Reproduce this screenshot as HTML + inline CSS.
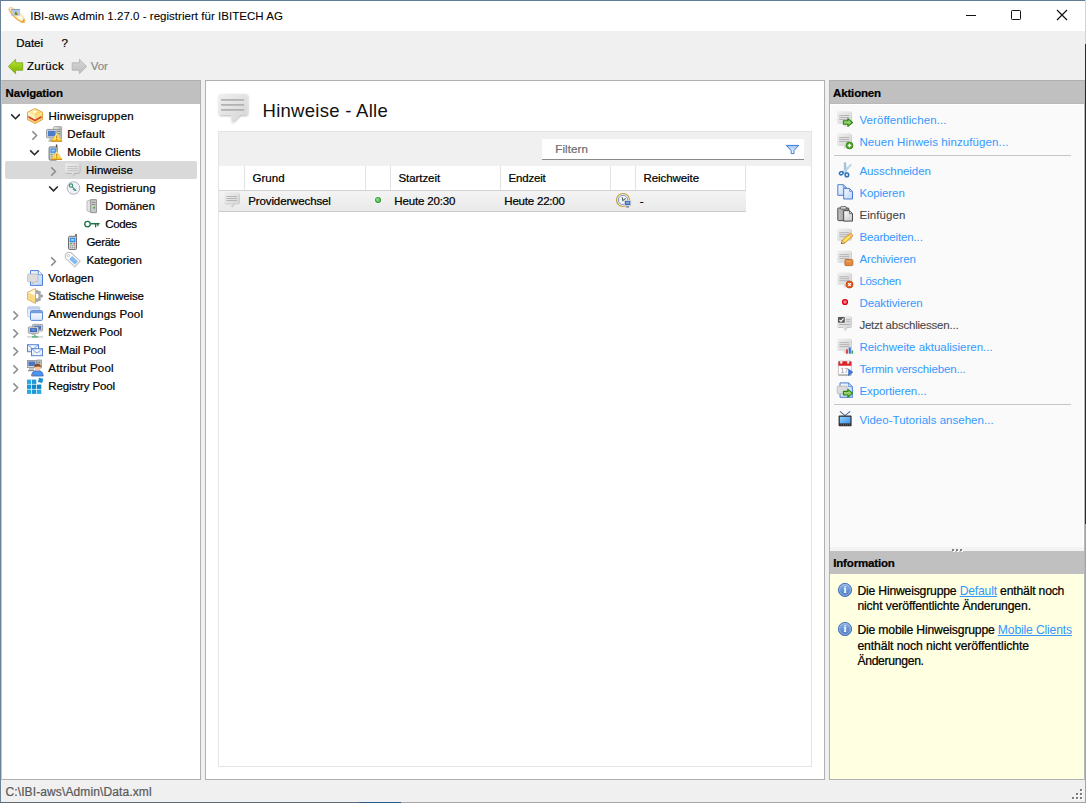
<!DOCTYPE html>
<html lang="de"><head><meta charset="utf-8"><title>IBI-aws Admin</title><style>
html,body{margin:0;padding:0;}
body{width:1086px;height:803px;overflow:hidden;background:#f0f0f0;font-family:"Liberation Sans", sans-serif;font-size:12px;color:#000;position:relative;}
.a{position:absolute;}
.t{position:absolute;white-space:pre;line-height:16px;height:16px;-webkit-text-stroke:0.22px currentColor;}
svg{position:absolute;overflow:visible;}
</style></head><body>
<!-- window frame -->
<div class="a" style="left:0;top:0;width:1086px;height:1px;background:#5f7e96"></div>
<div class="a" style="left:0;top:0;width:1px;height:803px;background:#6a8396"></div>
<div class="a" style="left:0;top:802px;width:1086px;height:1px;background:linear-gradient(90deg,#5f6b76 0,#5f6b76 359px,#2a5a8a 359px,#2a5a8a 401px,#a4a4a4 401px)"></div>
<div class="a" style="left:1085px;top:0;width:1px;height:803px;background:#a4a4a4"></div>
<div class="a" style="left:1085px;top:44px;width:1px;height:480px;background:#2b2b2b"></div>
<div class="a" style="left:1085px;top:0;width:1px;height:44px;background:#c9d6df"></div>
<!-- title bar -->
<div class="a" style="left:1px;top:1px;width:1084px;height:30px;background:#fff"></div>
<!-- navigation panel -->
<div class="a" style="left:1px;top:80px;width:200px;height:700px;background:#fff;box-sizing:border-box;border:1px solid #b0b0b0;border-left-color:#c8c8c8"></div>
<div class="a" style="left:2px;top:81px;width:198px;height:23px;background:#c0c0c0"></div>
<div class="a" style="left:5px;top:161px;width:192px;height:18px;background:#d9d9d9;border-radius:2px"></div>
<!-- centre panel -->
<div class="a" style="left:205px;top:80px;width:620px;height:700px;background:#fff;box-sizing:border-box;border:1px solid #b0b0b0"></div>
<div class="a" style="left:218px;top:131px;width:594px;height:636px;background:#fff;box-sizing:border-box;border:1px solid #e4e4e4"></div>
<div class="a" style="left:219px;top:132px;width:592px;height:34px;background:#f0f0f0"></div>
<div class="a" style="left:542px;top:139px;width:262px;height:20px;background:#fff;border-bottom:1px solid #8a8a8a"></div>
<!-- table header -->
<div class="a" style="left:219px;top:190px;width:527px;height:1px;background:#d2d2d2"></div>
<div class="a" style="left:244px;top:166px;width:1px;height:24px;background:#e2e2e2"></div>
<div class="a" style="left:365px;top:166px;width:1px;height:24px;background:#e2e2e2"></div>
<div class="a" style="left:390px;top:166px;width:1px;height:24px;background:#e2e2e2"></div>
<div class="a" style="left:500px;top:166px;width:1px;height:24px;background:#e2e2e2"></div>
<div class="a" style="left:610px;top:166px;width:1px;height:24px;background:#e2e2e2"></div>
<div class="a" style="left:635px;top:166px;width:1px;height:24px;background:#e2e2e2"></div>
<div class="a" style="left:745px;top:166px;width:1px;height:24px;background:#e2e2e2"></div>
<!-- table row -->
<div class="a" style="left:219px;top:191px;width:527px;height:20px;background:linear-gradient(#f4f4f4,#e9e9e9)"></div>
<div class="a" style="left:219px;top:211px;width:527px;height:1px;background:#cbcbcb"></div>
<!-- actions panel -->
<div class="a" style="left:829px;top:80px;width:256px;height:471px;background:#fbfbfb;box-sizing:border-box;border:1px solid #b0b0b0;border-right:0;border-bottom:0"></div>
<div class="a" style="left:830px;top:81px;width:255px;height:23px;background:#c0c0c0"></div>
<div class="a" style="left:830px;top:103px;width:254px;height:1px;background:#b9b9b9"></div>
<div class="a" style="left:830px;top:104px;width:254px;height:443px;background:#fff"></div>
<div class="a" style="left:831px;top:105px;width:252px;height:442px;background:#fafafa"></div>
<div class="a" style="left:830px;top:547px;width:254px;height:4px;background:#f3f3f3"></div>
<div class="a" style="left:834px;top:155px;width:237px;height:1px;background:#c6c6c6"></div>
<div class="a" style="left:834px;top:404px;width:237px;height:1px;background:#c6c6c6"></div>
<!-- information panel -->
<div class="a" style="left:829px;top:551px;width:256px;height:229px;background:#ffffe1;box-sizing:border-box;border:1px solid #b0b0b0;border-right:0;border-top:0"></div>
<div class="a" style="left:830px;top:551px;width:255px;height:23px;background:#c0c0c0"></div>
<div class="a" style="left:1084px;top:80px;width:1px;height:700px;background:#b4b8bc"></div>

<svg class="a" style="left:0;top:0" width="1086" height="803" viewBox="0 0 1086 803">
<defs>
<linearGradient id="gB" x1="0" y1="0" x2="1" y2="1"><stop offset="0" stop-color="#f0f0f0"/><stop offset="1" stop-color="#d4d4d4"/></linearGradient>
<linearGradient id="gBs" x1="0" y1="0" x2="1" y2="1"><stop offset="0" stop-color="#f0f0f0"/><stop offset="1" stop-color="#d6d6d6"/></linearGradient>
<filter id="fSh" x="-20%" y="-20%" width="150%" height="150%"><feDropShadow dx="0.5" dy="0.6" stdDeviation="0.5" flood-color="#000" flood-opacity="0.34"/></filter>
<filter id="fShL" x="-20%" y="-20%" width="150%" height="150%"><feDropShadow dx="0.8" dy="0.9" stdDeviation="0.8" flood-color="#000" flood-opacity="0.3"/></filter>
<linearGradient id="gTi" x1="0" y1="0" x2="0" y2="1"><stop offset="0" stop-color="#ffffff"/><stop offset="1" stop-color="#ffedc2"/></linearGradient>
<linearGradient id="gTs" x1="0" y1="0" x2="0" y2="1"><stop offset="0" stop-color="#fbe2b0"/><stop offset="1" stop-color="#f0aa34"/></linearGradient>
<linearGradient id="gWarn" x1="0" y1="0" x2="0" y2="1"><stop offset="0" stop-color="#fff6c0"/><stop offset="0.6" stop-color="#ffe45e"/><stop offset="1" stop-color="#ffd030"/></linearGradient>
<linearGradient id="gGr" x1="0" y1="0" x2="0" y2="1"><stop offset="0" stop-color="#b4e08c"/><stop offset="1" stop-color="#74bc48"/></linearGradient>
<linearGradient id="gBack" x1="0" y1="0" x2="0" y2="1"><stop offset="0" stop-color="#c3e64a"/><stop offset="0.5" stop-color="#98cc14"/><stop offset="1" stop-color="#7eb008"/></linearGradient>
<linearGradient id="gFwd" x1="0" y1="0" x2="0" y2="1"><stop offset="0" stop-color="#d8d8d8"/><stop offset="1" stop-color="#bcbcbc"/></linearGradient>
<linearGradient id="gInfo" x1="0" y1="0" x2="0" y2="1"><stop offset="0" stop-color="#90b3e2"/><stop offset="1" stop-color="#4876c2"/></linearGradient>
<linearGradient id="gDoc" x1="0" y1="0" x2="1" y2="1"><stop offset="0" stop-color="#f6faff"/><stop offset="1" stop-color="#bcd4f6"/></linearGradient>
<linearGradient id="gClip" x1="0" y1="0" x2="1" y2="0"><stop offset="0" stop-color="#c6c6c6"/><stop offset="1" stop-color="#848484"/></linearGradient>
<linearGradient id="gPg" x1="0" y1="0" x2="1" y2="1"><stop offset="0" stop-color="#ffffff"/><stop offset="1" stop-color="#c4c4c4"/></linearGradient>
<linearGradient id="gSrv" x1="0" y1="0" x2="1" y2="0"><stop offset="0" stop-color="#f0f0f0"/><stop offset="1" stop-color="#b0b0b0"/></linearGradient>
<linearGradient id="gTv" x1="0" y1="0" x2="1" y2="1"><stop offset="0" stop-color="#8fd0ff"/><stop offset="1" stop-color="#3f96ea"/></linearGradient>
<linearGradient id="gWin" x1="0" y1="0" x2="0" y2="1"><stop offset="0" stop-color="#ffffff"/><stop offset="1" stop-color="#d8e4f6"/></linearGradient>
<linearGradient id="gFun" x1="0" y1="0" x2="0" y2="1"><stop offset="0" stop-color="#9cc2f2"/><stop offset="1" stop-color="#ffffff"/></linearGradient>
<radialGradient id="gGd" cx="0.45" cy="0.45" r="0.6"><stop offset="0" stop-color="#8fd68f"/><stop offset="0.55" stop-color="#6cc86c"/><stop offset="0.6" stop-color="#2aa52a"/><stop offset="1" stop-color="#1f8a1f"/></radialGradient>
</defs>
<g><g transform="rotate(43 17 15)"><ellipse cx="17" cy="15" rx="10.3" ry="3.1" fill="url(#gTi)" stroke="url(#gTs)" stroke-width="1.1"/><path d="M24.5 13.4A10.3 3.1 0 0 1 24.5 16.6" fill="none" stroke="#e9a02c" stroke-width="1.5"/></g><rect x="11" y="9" width="9.1" height="6.8" fill="#a4c3e4" opacity="0.85"/><rect x="11" y="9" width="9.1" height="0.9" fill="#7596bd" opacity="0.9"/><path d="M14.4 15 L15.7 10.9 L18 15z" fill="#8a7a14"/><path d="M10.4 10.4 L17 16.8" stroke="#f3c66a" stroke-width="1.1" stroke-dasharray="0.8 0.5" opacity="0.9"/></g>
<g stroke="#111" stroke-width="1" fill="none"><path d="M966 15.5H976"/><rect x="1011.5" y="10.5" width="9" height="9" rx="0.8"/><path d="M1057 10L1067 20M1067 10L1057 20" stroke-width="1.2"/></g>
<path d="M8.3 66.5L15.6 59.3V62.8H22.7V70.2H15.6V73.7z" fill="url(#gBack)" stroke="#7fae1c" stroke-width="0.9" stroke-linejoin="round"/>
<path d="M86.7 66.5L79.4 59.3V62.8H72.2V70.2H79.4V73.7z" fill="url(#gFwd)" stroke="#b4b4b4" stroke-width="0.9" stroke-linejoin="round"/>
<path d="M11.2 114.39999999999999 l4.3 4.3 l4.3 -4.3" fill="none" stroke="#262626" stroke-width="1.6"/>
<path d="M32.400000000000006 131.4 l4.2 4.1 l-4.2 4.1" fill="none" stroke="#8c8c8c" stroke-width="1.5"/>
<path d="M30.2 150.4 l4.3 4.3 l4.3 -4.3" fill="none" stroke="#262626" stroke-width="1.6"/>
<path d="M51.2 167.4 l4.2 4.1 l-4.2 4.1" fill="none" stroke="#8c8c8c" stroke-width="1.5"/>
<path d="M49.2 186.5 l4.3 4.3 l4.3 -4.3" fill="none" stroke="#262626" stroke-width="1.6"/>
<path d="M51.2 257.4 l4.2 4.1 l-4.2 4.1" fill="none" stroke="#8c8c8c" stroke-width="1.5"/>
<path d="M13.399999999999999 311.4 l4.2 4.1 l-4.2 4.1" fill="none" stroke="#8c8c8c" stroke-width="1.5"/>
<path d="M13.399999999999999 329.4 l4.2 4.1 l-4.2 4.1" fill="none" stroke="#8c8c8c" stroke-width="1.5"/>
<path d="M13.399999999999999 347.4 l4.2 4.1 l-4.2 4.1" fill="none" stroke="#8c8c8c" stroke-width="1.5"/>
<path d="M13.399999999999999 365.4 l4.2 4.1 l-4.2 4.1" fill="none" stroke="#8c8c8c" stroke-width="1.5"/>
<path d="M13.399999999999999 383.4 l4.2 4.1 l-4.2 4.1" fill="none" stroke="#8c8c8c" stroke-width="1.5"/>
<g transform="translate(27,108)"><path d="M8 0.6L15.4 4.2V11.6L8 15.5L0.6 11.6V4.2z" fill="#fff6d8" stroke="#dfa030" stroke-width="1" stroke-linejoin="round"/><path d="M8 1.2L14.7 4.5L8 8.4L1.3 4.5z" fill="#fce79c"/><path d="M8 1.2L14.7 4.5L8 8.4z" fill="#f8d468"/><path d="M8 2.2L10.6 3.6L8 5.2L5.6 3.8z" fill="#fff8dc"/><path d="M1.3 4.7L8 8.6L14.7 4.7V7.6L8 11.5L1.3 7.6z" fill="#fdf1c0"/><path d="M8 8.6L14.7 4.7V7.6L8 11.5z" fill="#f9dc7c"/><path d="M1.3 7.7L8 11.6L14.7 7.7V9.9L8 13.6L1.3 9.9z" fill="#d8432c"/><path d="M1.3 9.9L8 13.6L14.7 9.9V11.3L8 14.9L1.3 11.3z" fill="#f7c655"/></g>
<g transform="translate(46,126)"><rect x="7.6" y="0.6" width="8" height="13" rx="0.8" fill="url(#gSrv)" stroke="#9a9a9a" stroke-width="0.8"/><rect x="11.5" y="3" width="3" height="0.9" fill="#8a8a8a"/><rect x="11.5" y="5" width="3" height="0.9" fill="#8a8a8a"/><rect x="12.6" y="7" width="1.6" height="1.4" fill="#3ab03a"/><rect x="0.6" y="3.4" width="10.4" height="8.4" rx="0.8" fill="#d9d9d9" stroke="#8f8f8f" stroke-width="0.9"/><rect x="2" y="4.8" width="7.6" height="5.5" fill="#4d7ccb"/><rect x="3.4" y="12.2" width="4.8" height="2.4" fill="#b8b8b8"/><rect x="2.4" y="14.4" width="7" height="1.1" fill="#9a9a9a"/></g>
<g transform="translate(51.2,132.3)"><path d="M5.5 0.6 L10.5 8.4 Q10.7 9.1 10 9.1 H1 Q0.3 9.1 0.5 8.4z" fill="url(#gWarn)" stroke="#eba92e" stroke-width="0.7" stroke-dasharray="1.1 0.5"/><path d="M0.6 8.9H10.4" stroke="#cf8a1c" stroke-width="1.3" stroke-linecap="round"/><rect x="5" y="3.2" width="1.1" height="2.9" fill="#c27c16"/><rect x="5" y="6.8" width="1.1" height="1" fill="#c27c16"/></g>
<g transform="translate(48.6,146.4)"><rect x="7.3" y="-1.9" width="1.4" height="5" fill="#444"/><rect x="0.5" y="0.5" width="8" height="13.2" rx="1.2" fill="#d4d4d4" stroke="#6e6e6e" stroke-width="1"/><rect x="1.9" y="2" width="5.4" height="4.4" fill="#2f8cf0"/><rect x="3" y="3.2" width="3.2" height="1.8" fill="#9fd0ff"/><rect x="2" y="7.4" width="2" height="1" fill="#3cb03c"/><rect x="5.4" y="7.4" width="1.6" height="1" fill="#e03030"/><g fill="#909090"><rect x="2" y="9.4" width="1.2" height="1"/><rect x="4" y="9.4" width="1.2" height="1"/><rect x="6" y="9.4" width="1.2" height="1"/><rect x="2" y="11.3" width="1.2" height="1"/><rect x="4" y="11.3" width="1.2" height="1"/><rect x="6" y="11.3" width="1.2" height="1"/></g></g>
<g transform="translate(51.2,150.4)"><path d="M5.5 0.6 L10.5 8.4 Q10.7 9.1 10 9.1 H1 Q0.3 9.1 0.5 8.4z" fill="url(#gWarn)" stroke="#eba92e" stroke-width="0.7" stroke-dasharray="1.1 0.5"/><path d="M0.6 8.9H10.4" stroke="#cf8a1c" stroke-width="1.3" stroke-linecap="round"/><rect x="5" y="3.2" width="1.1" height="2.9" fill="#c27c16"/><rect x="5" y="6.8" width="1.1" height="1" fill="#c27c16"/></g>
<g transform="translate(65.2,163.2)" opacity="0.92"><path d="M1.2 0H13.100000000000001 a1.2 1.2 0 0 1 1.2 1.2V8.4 a1.2 1.2 0 0 1 -1.2 1.2H9.6 L7.6 12.4 L6.6 9.6 H1.2 a1.2 1.2 0 0 1 -1.2 -1.2V1.2 a1.2 1.2 0 0 1 1.2 -1.2z" fill="url(#gB)" filter="url(#fSh)"/><rect x="2" y="2.8" width="10.5" height="1" fill="#c4c4c4"/><rect x="2" y="4.8" width="10.5" height="1" fill="#c4c4c4"/><rect x="2" y="6.8" width="10.5" height="1" fill="#c4c4c4"/></g>
<g><circle cx="73.5" cy="188" r="6.3" fill="#f1f1fb" stroke="#b4b4bc" stroke-width="1"/><circle cx="71" cy="185.6" r="1.7" fill="none" stroke="#3a9566" stroke-width="1.1"/><path d="M72.2 186.8L76.2 190.6M74.2 188.7L73 190M75.4 189.8L74.4 190.9" stroke="#3a9566" stroke-width="1.1" fill="none"/></g>
<g transform="translate(86,199)"><path d="M1 2.2L5 0.6H10.4V13.6H5L1 11.6z" fill="url(#gSrv)" stroke="#a8a8a8" stroke-width="0.8"/><rect x="4.6" y="0.8" width="5.8" height="12.8" rx="0.6" fill="#c9c9c9" stroke="#8c8c8c" stroke-width="0.8"/><rect x="5.8" y="3" width="3.4" height="0.9" fill="#8a8a8a"/><rect x="5.8" y="5" width="3.4" height="0.9" fill="#8a8a8a"/><path d="M7 8.6L9 7.4V9.6H7z" fill="#36b036"/></g>
<g stroke="#1b7443" fill="none"><circle cx="87.5" cy="224.1" r="2.75" stroke-width="1.3"/><path d="M90.4 223.7H99.6" stroke-width="1.5"/><path d="M95.6 224V227.4" stroke-width="1.3"/><path d="M97.8 224V226.2" stroke-width="1.2"/></g>
<g transform="translate(68,235.8)"><rect x="7.3" y="-1.9" width="1.4" height="5" fill="#444"/><rect x="0.5" y="0.5" width="8" height="13.2" rx="1.2" fill="#d4d4d4" stroke="#6e6e6e" stroke-width="1"/><rect x="1.9" y="2" width="5.4" height="4.4" fill="#2f8cf0"/><rect x="3" y="3.2" width="3.2" height="1.8" fill="#9fd0ff"/><rect x="2" y="7.4" width="2" height="1" fill="#3cb03c"/><rect x="5.4" y="7.4" width="1.6" height="1" fill="#e03030"/><g fill="#909090"><rect x="2" y="9.4" width="1.2" height="1"/><rect x="4" y="9.4" width="1.2" height="1"/><rect x="6" y="9.4" width="1.2" height="1"/><rect x="2" y="11.3" width="1.2" height="1"/><rect x="4" y="11.3" width="1.2" height="1"/><rect x="6" y="11.3" width="1.2" height="1"/></g></g>
<g transform="translate(72.4,259.3) rotate(43)"><path d="M-8.4 -1.4 L-5.8 -3.9 H7 V3.9 H-5.8 L-8.4 1.4z" fill="#fff" stroke="#c2c2c2" stroke-width="1.1" stroke-linejoin="round"/><circle cx="-5.4" cy="0" r="1.2" fill="#fff" stroke="#bdbdbd" stroke-width="0.8"/><rect x="-2.4" y="-2.3" width="8" height="4.6" fill="#86bcf4"/></g>
<g><path d="M30.5 270.6H38.4L42.5 274.7V285.4H30.5z" fill="url(#gDoc)" stroke="#4c80d6" stroke-width="1" stroke-linejoin="round"/><path d="M38.4 270.6V274.7H42.5" fill="#fff" stroke="#4c80d6" stroke-width="0.8"/><path d="M28.4 274H37.2a0.8 0.8 0 0 1 0.8 0.8V281a0.8 0.8 0 0 1 -0.8 0.8H34.6L32.4 284.2V281.8H28.4a0.8 0.8 0 0 1 -0.8 -0.8V274.8a0.8 0.8 0 0 1 0.8 -0.8z" fill="#dedede" stroke="#b2b2b2" stroke-width="0.7"/></g>
<g transform="translate(27,288)"><path d="M8.6 0.6V15.4L0.7 11.4V4.4z" fill="#fdf0c8" stroke="#e1a535" stroke-width="1" stroke-linejoin="round"/><path d="M1.2 4.6L8.2 7.8V14.6L1.2 11.2z" fill="#fbd87a" opacity="0.9"/><path d="M8.2 1.2V7.6L1.4 4.5z" fill="#fff8e4"/><g fill="#a9a9a9" stroke="#8d8d8d" stroke-width="0.5"><path d="M9 2.6 L10.6 2.2 L11.4 3.6 L13 3.2 L13.8 4.6 L13 5.8 L14 6.8 L15.6 6.9 V9.1 L14 9.2 L13 10.2 L13.8 11.4 L13 12.8 L11.4 12.4 L10.6 13.8 L9 13.4z"/></g><path d="M9 5.4A2.6 2.6 0 0 1 9 10.6z" fill="#fff"/></g>
<g><rect x="27.7" y="306.8" width="12" height="10" rx="1" fill="#eaf0fb" stroke="#b3c8ec" stroke-width="1"/><rect x="28.2" y="307.3" width="11" height="2" fill="#b9cdee"/><rect x="30.5" y="310.6" width="12" height="9.8" rx="1" fill="url(#gWin)" stroke="#5b8ad8" stroke-width="1"/><rect x="31" y="311.1" width="11" height="2.1" fill="#6f9be0"/></g>
<g><rect x="32.6" y="324.4" width="10" height="6.6" rx="0.6" fill="#dcdcdc" stroke="#8e8e8e" stroke-width="0.8"/><rect x="34" y="325.6" width="7.2" height="4.2" fill="#4d78c4"/><rect x="28.4" y="326.9" width="10" height="6.4" rx="0.6" fill="#e0e0e0" stroke="#8e8e8e" stroke-width="0.8"/><rect x="29.8" y="328.1" width="7.2" height="4" fill="#3f6cc0"/><rect x="31.4" y="329.4" width="4" height="1.2" fill="#7fa2dc"/><rect x="31.6" y="333.6" width="3.6" height="1.2" fill="#aaa"/><rect x="34.4" y="334.6" width="1.2" height="2" fill="#3aa86a"/><rect x="27" y="336.3" width="16" height="1.2" fill="#c2c8c8"/><rect x="32" y="336.3" width="6" height="1.2" fill="#3aa86a"/></g>
<g transform="translate(27,344.2)"><rect x="0.5" y="0.5" width="11" height="7" fill="#f4f8ff" stroke="#5583d2" stroke-width="1"/><path d="M0.8 0.8L6 4.8L11.2 0.8" fill="none" stroke="#6f97dc" stroke-width="0.9"/><path d="M0.8 7.2L4.4 3.8M11.2 7.2L7.6 3.8" stroke="#a8c0ea" stroke-width="0.7"/></g>
<g transform="translate(31,348.2)"><rect x="0.5" y="0.5" width="11" height="7" fill="#f4f8ff" stroke="#5583d2" stroke-width="1"/><path d="M0.8 0.8L6 4.8L11.2 0.8" fill="none" stroke="#6f97dc" stroke-width="0.9"/><path d="M0.8 7.2L4.4 3.8M11.2 7.2L7.6 3.8" stroke="#a8c0ea" stroke-width="0.7"/></g>
<g><rect x="37" y="360" width="4.6" height="8" fill="#c4c4c4" stroke="#8a8a8a" stroke-width="0.7"/><rect x="38.6" y="361.6" width="1.6" height="1.6" fill="#38a838"/><rect x="27.4" y="360.4" width="9" height="7" fill="#dadada" stroke="#8a8a8a" stroke-width="0.8"/><rect x="28.4" y="361.4" width="7" height="4.6" fill="#4c74c0"/><rect x="29" y="368.4" width="5" height="1.2" fill="#a0a0a0"/><rect x="28" y="370" width="6" height="1.2" fill="#8a8a8a"/><path d="M31.6 376 Q31.8 370.6 37.6 370.6 Q43 370.6 43.2 376z" fill="#4c94ec" stroke="#2c64c8" stroke-width="0.8"/><circle cx="37.6" cy="367.6" r="3.1" fill="#f6c8a0"/><path d="M34.3 367.2 Q34.4 363.6 37.8 363.8 Q41 363.9 40.9 367.2 Q38.4 365.6 34.3 367.2z" fill="#8a4a20"/><rect x="31.2" y="374.6" width="1.4" height="1.4" fill="#e88020"/></g>
<g><rect x="27" y="379.6" width="4.3" height="4.3" fill="#2aa8e4"/><rect x="32" y="379.6" width="4.3" height="4.3" fill="#1b98d6"/><rect x="27" y="384.6" width="4.3" height="4.3" fill="#1b98d6"/><rect x="32" y="384.6" width="4.3" height="4.3" fill="#0f86c6"/><rect x="37" y="384.6" width="4.3" height="4.3" fill="#0f86c6"/><rect x="27" y="389.6" width="4.3" height="4.3" fill="#2aa8e4"/><rect x="32" y="389.6" width="4.3" height="4.3" fill="#1b98d6"/><rect x="37" y="389.6" width="4.3" height="4.3" fill="#2aa8e4"/><rect x="-2.2" y="-2.2" width="4.4" height="4.4" transform="translate(40.6,380.4) rotate(14)" fill="#1590d0"/></g>
<g transform="translate(218.4,94)"><path d="M2 0H26.8a2 2 0 0 1 2 2V19a2 2 0 0 1 -2 2H21.4L13.4 28.8L12.6 21H2a2 2 0 0 1 -2 -2V2a2 2 0 0 1 2 -2z" fill="url(#gB)" filter="url(#fShL)"/><rect x="2.7" y="5" width="23" height="1.8" fill="#b2b2b2"/><rect x="2.7" y="10" width="23" height="1.8" fill="#b2b2b2"/><rect x="2.7" y="15" width="23" height="1.8" fill="#b2b2b2"/></g>
<path d="M786.3 145.4H798.7L794 150.6V153.6H791.2V150.6z" fill="url(#gFun)" stroke="#3c7ad8" stroke-width="1" stroke-linejoin="round"/>
<g transform="translate(224.5,192.6)" opacity="1"><path d="M1.2 0H13.100000000000001 a1.2 1.2 0 0 1 1.2 1.2V9.4 a1.2 1.2 0 0 1 -1.2 1.2H9.4 L7.0 14.2 L6.2 10.6 H1.2 a1.2 1.2 0 0 1 -1.2 -1.2V1.2 a1.2 1.2 0 0 1 1.2 -1.2z" fill="url(#gB)" filter="url(#fSh)"/><rect x="1.8" y="3.4" width="10.799999999999999" height="1" fill="#b6b6b6"/><rect x="1.8" y="5.4" width="10.799999999999999" height="1" fill="#b6b6b6"/><rect x="1.8" y="7.4" width="10.799999999999999" height="1" fill="#b6b6b6"/></g>
<g><circle cx="378" cy="200" r="3.8" fill="#fff" opacity="0.8"/><circle cx="378" cy="199.95" r="3.0" fill="url(#gGd)"/></g>
<g><circle cx="623" cy="200" r="6.5" fill="#fff8e2" stroke="#c79a3e" stroke-width="1.2"/><circle cx="623" cy="200" r="4.7" fill="#eef6fd" stroke="#6a96e2" stroke-width="1"/><path d="M622.2 197.4L622.9 200.6L625.6 198.4" fill="none" stroke="#555" stroke-width="1.1"/><rect x="624.4" y="200.4" width="6.4" height="5.2" fill="#3a6ab8" stroke="#d9d9d9" stroke-width="0.9"/><rect x="626" y="201.8" width="3.4" height="2" fill="#7fa6e0"/><rect x="626.2" y="206.2" width="2.8" height="1.4" fill="#808080"/></g>
<g transform="translate(837.2,111.6)" opacity="1"><path d="M1.2 0H12.600000000000001 a1.2 1.2 0 0 1 1.2 1.2V9.600000000000001 a1.2 1.2 0 0 1 -1.2 1.2H9.2 L7.0 14.4 L6.0 10.8 H1.2 a1.2 1.2 0 0 1 -1.2 -1.2V1.2 a1.2 1.2 0 0 1 1.2 -1.2z" fill="url(#gB)" filter="url(#fSh)"/><rect x="2" y="3.4" width="10.0" height="1" fill="#b4b4b4"/><rect x="2" y="5.4" width="10.0" height="1" fill="#b4b4b4"/><rect x="2" y="7.4" width="10.0" height="1" fill="#b4b4b4"/></g>
<path transform="translate(843,118.2)" d="M0.4 2.5H4.9V0.4L9.5 4.3L4.9 8.2V6.1H0.4z" fill="url(#gGr)" stroke="#2b8610" stroke-width="1.1" stroke-linejoin="round"/>
<g transform="translate(837.2,133.6)" opacity="1"><path d="M1.2 0H12.600000000000001 a1.2 1.2 0 0 1 1.2 1.2V9.600000000000001 a1.2 1.2 0 0 1 -1.2 1.2H9.2 L7.0 14.4 L6.0 10.8 H1.2 a1.2 1.2 0 0 1 -1.2 -1.2V1.2 a1.2 1.2 0 0 1 1.2 -1.2z" fill="url(#gB)" filter="url(#fSh)"/><rect x="2" y="3.4" width="10.0" height="1" fill="#b4b4b4"/><rect x="2" y="5.4" width="10.0" height="1" fill="#b4b4b4"/><rect x="2" y="7.4" width="10.0" height="1" fill="#b4b4b4"/></g>
<g><circle cx="849.5" cy="145.5" r="3.4" fill="#4caa24" stroke="#2f8212" stroke-width="0.9"/><path d="M847.8 145.5H851.2M849.5 143.8V147.2" stroke="#fff" stroke-width="1.3"/></g>
<g><path d="M844.2 162.6L845.6 162.6L846.6 172.6L844.4 173z" fill="#a4c6e4" stroke="#86aed2" stroke-width="0.5"/><path d="M850.8 164L851.2 165.2L844.2 173.4L842.8 172z" fill="#cfe2f2" stroke="#8fb2d2" stroke-width="0.5"/><ellipse cx="841.3" cy="173.2" rx="1.9" ry="1.5" transform="rotate(-25 841.3 173.2)" fill="none" stroke="#2b73ba" stroke-width="1.5"/><circle cx="846.9" cy="174.9" r="1.8" fill="#eaf2fa" stroke="#2b73ba" stroke-width="1.5"/></g>
<g transform="translate(837.3,184.2)"><path d="M0.5 0.5H6.1L9.1 3.5V11.1H0.5z" fill="url(#gDoc)" stroke="#4b7cd2" stroke-width="1" stroke-linejoin="miter"/><path d="M6.1 0.5V3.5H9.1" fill="none" stroke="#4b7cd2" stroke-width="0.7"/></g>
<g transform="translate(843.2,187.9)"><path d="M0.5 0.5H6.300000000000001L9.3 3.5V11.1H0.5z" fill="url(#gDoc)" stroke="#4b7cd2" stroke-width="1" stroke-linejoin="miter"/><path d="M6.300000000000001 0.5V3.5H9.3" fill="none" stroke="#4b7cd2" stroke-width="0.7"/></g>
<g><rect x="837.8" y="208" width="11" height="12.6" rx="0.6" fill="url(#gClip)" stroke="#4e4e4e" stroke-width="1"/><rect x="840.6" y="206.6" width="5.6" height="2.6" rx="0.6" fill="#dcdcdc" stroke="#4e4e4e" stroke-width="0.8"/></g>
<g transform="translate(843.2,210.2)"><path d="M0.5 0.5H6.300000000000001L9.3 3.5V10.9H0.5z" fill="url(#gPg)" stroke="#4e4e4e" stroke-width="1" stroke-linejoin="miter"/><path d="M6.300000000000001 0.5V3.5H9.3" fill="none" stroke="#4e4e4e" stroke-width="0.7"/></g>
<g transform="translate(837.2,228.8)" opacity="1"><path d="M1.2 0H12.600000000000001 a1.2 1.2 0 0 1 1.2 1.2V9.600000000000001 a1.2 1.2 0 0 1 -1.2 1.2H9.2 L7 13 L6 10.8 H1.2 a1.2 1.2 0 0 1 -1.2 -1.2V1.2 a1.2 1.2 0 0 1 1.2 -1.2z" fill="url(#gB)" filter="url(#fSh)"/><rect x="2" y="3.4" width="10.0" height="1" fill="#b4b4b4"/><rect x="2" y="5.4" width="10.0" height="1" fill="#b4b4b4"/><rect x="2" y="7.4" width="10.0" height="1" fill="#b4b4b4"/></g>
<g transform="translate(846.9,238.7) rotate(-41)"><path d="M-7.4 0L-4.6 -1.9H5.4a1.1 1.1 0 0 1 1.1 1.1V0.8a1.1 1.1 0 0 1 -1.1 1.1H-4.6z" fill="#f9d43a" stroke="#d98a1a" stroke-width="0.7"/><path d="M-7.4 0L-4.6 -1.9V1.9z" fill="#f3d9b0" stroke="#a8641a" stroke-width="0.5"/><path d="M-7.4 0L-6.3 -0.75V0.75z" fill="#5a3010"/><rect x="3.9" y="-1.9" width="2.6" height="3.8" rx="0.9" fill="#f5b8a8" stroke="#d98a1a" stroke-width="0.5"/><path d="M-4.4 0H4.4" stroke="#fff2a0" stroke-width="0.9"/></g>
<g transform="translate(837.2,250.7)" opacity="1"><path d="M1.2 0H12.600000000000001 a1.2 1.2 0 0 1 1.2 1.2V9.600000000000001 a1.2 1.2 0 0 1 -1.2 1.2H9.2 L7.0 14.4 L6.0 10.8 H1.2 a1.2 1.2 0 0 1 -1.2 -1.2V1.2 a1.2 1.2 0 0 1 1.2 -1.2z" fill="url(#gB)" filter="url(#fSh)"/><rect x="2" y="3.4" width="10.0" height="1" fill="#b4b4b4"/><rect x="2" y="5.4" width="10.0" height="1" fill="#b4b4b4"/><rect x="2" y="7.4" width="10.0" height="1" fill="#b4b4b4"/></g>
<rect x="845" y="259.6" width="7.8" height="6" rx="1" fill="#e28a42" stroke="#b8691f" stroke-width="0.9"/><rect x="846" y="260.6" width="5.8" height="1.2" fill="#efa764"/>
<g transform="translate(837.2,272.8)" opacity="1"><path d="M1.2 0H12.600000000000001 a1.2 1.2 0 0 1 1.2 1.2V9.600000000000001 a1.2 1.2 0 0 1 -1.2 1.2H9.2 L7.0 14.4 L6.0 10.8 H1.2 a1.2 1.2 0 0 1 -1.2 -1.2V1.2 a1.2 1.2 0 0 1 1.2 -1.2z" fill="url(#gB)" filter="url(#fSh)"/><rect x="2" y="3.4" width="10.0" height="1" fill="#b4b4b4"/><rect x="2" y="5.4" width="10.0" height="1" fill="#b4b4b4"/><rect x="2" y="7.4" width="10.0" height="1" fill="#b4b4b4"/></g>
<g><circle cx="849.5" cy="284.5" r="3.5" fill="#e2581a" stroke="#c84008" stroke-width="0.8"/><path d="M848.1 283.1L850.9 285.9M850.9 283.1L848.1 285.9" stroke="#fff" stroke-width="1.1"/></g>
<g><circle cx="845" cy="302" r="2.45" fill="#f0808e" stroke="#e00014" stroke-width="1.35"/></g>
<g transform="translate(837.2,316.2)" opacity="1"><path d="M1.2 0H12.600000000000001 a1.2 1.2 0 0 1 1.2 1.2V9.600000000000001 a1.2 1.2 0 0 1 -1.2 1.2H9.4 L7.4 14.2 L6 10.8 H1.2 a1.2 1.2 0 0 1 -1.2 -1.2V1.2 a1.2 1.2 0 0 1 1.2 -1.2z" fill="url(#gB)" filter="url(#fSh)"/></g>
<g><rect x="838" y="317" width="6.8" height="5.8" rx="0.8" fill="#585858"/><path d="M839.4 319.9L841 321.4L843.6 318.3" fill="none" stroke="#fff" stroke-width="1.1"/><rect x="846" y="319.2" width="4.4" height="1" fill="#b4b4b4"/><rect x="846" y="321.2" width="4.4" height="1" fill="#b4b4b4"/><rect x="839" y="324" width="11.4" height="1" fill="#b4b4b4"/></g>
<g transform="translate(837.2,338.7)" opacity="1"><path d="M1.2 0H12.600000000000001 a1.2 1.2 0 0 1 1.2 1.2V9.600000000000001 a1.2 1.2 0 0 1 -1.2 1.2H9.2 L7.0 14.4 L6.0 10.8 H1.2 a1.2 1.2 0 0 1 -1.2 -1.2V1.2 a1.2 1.2 0 0 1 1.2 -1.2z" fill="url(#gB)" filter="url(#fSh)"/><rect x="2" y="3.4" width="10.0" height="1" fill="#b4b4b4"/><rect x="2" y="5.4" width="10.0" height="1" fill="#b4b4b4"/><rect x="2" y="7.4" width="10.0" height="1" fill="#b4b4b4"/></g>
<g><rect x="846" y="349.4" width="2" height="4.3" fill="#e04848"/><rect x="848.7" y="347.4" width="2.2" height="6.3" fill="#3f78d8"/><rect x="851.4" y="350.4" width="1.7" height="3.3" fill="#3fa848"/></g>
<g><rect x="838.4" y="361.2" width="13" height="14" rx="0.8" fill="#fff" stroke="#b8b8b8" stroke-width="0.8"/><path d="M838.4 362a0.8 0.8 0 0 1 0.8 -0.8H850.6a0.8 0.8 0 0 1 0.8 0.8V365.8H838.4z" fill="#e0222a"/><rect x="840.2" y="360.4" width="2" height="3.2" rx="0.9" fill="#f4f4f4" stroke="#c8c8c8" stroke-width="0.4"/><rect x="847.2" y="360.4" width="2" height="3.2" rx="0.9" fill="#f4f4f4" stroke="#c8c8c8" stroke-width="0.4"/><text x="844.4" y="373.2" font-family="Liberation Sans, sans-serif" font-size="6.8" fill="#8f8f8f" text-anchor="middle">17</text><rect x="838.4" y="374.4" width="13" height="1.1" fill="#9a9a9a"/><path d="M848.5 369V375.5L852.8 372.2z" fill="#3574de" stroke="#2a5cc0" stroke-width="0.5"/></g>
<g><path d="M840 382.9H848.6L852.4 386.6V397.3H840z" fill="url(#gDoc)" stroke="#4b7cd2" stroke-width="1" stroke-linejoin="round"/><path d="M848.6 382.9V386.6H852.4" fill="none" stroke="#4b7cd2" stroke-width="0.7"/><rect x="837.2" y="386.2" width="10" height="7.6" rx="1" fill="#dcdcdc" stroke="#b0b0b0" stroke-width="0.7"/></g>
<path transform="translate(843,388.9)" d="M0.4 2.5H4.9V0.4L9.5 4.3L4.9 8.2V6.1H0.4z" fill="url(#gGr)" stroke="#2b8610" stroke-width="1.1" stroke-linejoin="round"/>
<g><path d="M840 411.3L845 415.6L850.2 411.3" fill="none" stroke="#4a6a9a" stroke-width="1.1"/><rect x="838.6" y="415.6" width="13" height="10.6" rx="0.8" fill="#2e2e2e"/><rect x="839.8" y="416.8" width="10.6" height="6.6" fill="url(#gTv)"/><rect x="840.6" y="424.4" width="1.4" height="1" fill="#e03030"/><g fill="#888"><rect x="843" y="424.5" width="1" height="0.8"/><rect x="845" y="424.5" width="1" height="0.8"/><rect x="847" y="424.5" width="1" height="0.8"/><rect x="849" y="424.5" width="1" height="0.8"/></g></g>
<g><circle cx="845" cy="589.9" r="6.6" fill="url(#gInfo)" stroke="#4a74ba" stroke-width="1"/><circle cx="845" cy="589.9" r="5.4" fill="none" stroke="#a8c6ee" stroke-width="0.8" opacity="0.8"/><text x="845" y="593.3" font-family="Liberation Serif, serif" font-weight="bold" font-size="10.5" fill="#fff" text-anchor="middle">i</text></g>
<g><circle cx="845" cy="629" r="6.6" fill="url(#gInfo)" stroke="#4a74ba" stroke-width="1"/><circle cx="845" cy="629" r="5.4" fill="none" stroke="#a8c6ee" stroke-width="0.8" opacity="0.8"/><text x="845" y="632.4" font-family="Liberation Serif, serif" font-weight="bold" font-size="10.5" fill="#fff" text-anchor="middle">i</text></g>
<g><rect x="953" y="550" width="2" height="2" fill="#fff"/><rect x="952" y="549" width="2" height="2" fill="#808080"/><rect x="957" y="550" width="2" height="2" fill="#fff"/><rect x="956" y="549" width="2" height="2" fill="#808080"/><rect x="961" y="550" width="2" height="2" fill="#fff"/><rect x="960" y="549" width="2" height="2" fill="#808080"/><rect x="1081" y="790" width="2" height="2" fill="#fff"/><rect x="1080" y="789" width="2" height="2" fill="#7d7d7d"/><rect x="1077" y="794" width="2" height="2" fill="#fff"/><rect x="1076" y="793" width="2" height="2" fill="#7d7d7d"/><rect x="1081" y="794" width="2" height="2" fill="#fff"/><rect x="1080" y="793" width="2" height="2" fill="#7d7d7d"/><rect x="1073" y="798" width="2" height="2" fill="#fff"/><rect x="1072" y="797" width="2" height="2" fill="#7d7d7d"/><rect x="1077" y="798" width="2" height="2" fill="#fff"/><rect x="1076" y="797" width="2" height="2" fill="#7d7d7d"/><rect x="1081" y="798" width="2" height="2" fill="#fff"/><rect x="1080" y="797" width="2" height="2" fill="#7d7d7d"/></g>
</svg>
<div class="t" style="left:30.2px;top:7.7px;font-size:11.5px;letter-spacing:0.031px;-webkit-text-stroke:0.08px currentColor">IBI-aws Admin 1.27.0 - registriert für IBITECH AG</div>
<div class="t" style="left:16.2px;top:34.6px;font-size:11.5px;letter-spacing:0.008px;">Datei</div>
<div class="t" style="left:61.5px;top:34.6px;font-size:11.5px;letter-spacing:-1.206px;">?</div>
<div class="t" style="left:26.9px;top:58.1px;font-size:11.5px;letter-spacing:0.341px;">Zurück</div>
<div class="t" style="left:90.8px;top:58.1px;font-size:11.5px;letter-spacing:-0.122px;color:#8a8a8a">Vor</div>
<div class="t" style="left:5.5px;top:84.5px;font-size:11.5px;letter-spacing:-0.150px;font-weight:bold">Navigation</div>
<div class="t" style="left:833.0px;top:84.5px;font-size:11.5px;letter-spacing:-0.150px;font-weight:bold">Aktionen</div>
<div class="t" style="left:833.2px;top:555.0px;font-size:11.5px;letter-spacing:-0.159px;font-weight:bold">Information</div>
<div class="t" style="left:48.4px;top:108.0px;font-size:11.5px;letter-spacing:0.217px;">Hinweisgruppen</div>
<div class="t" style="left:67.3px;top:126.0px;font-size:11.5px;letter-spacing:0.180px;">Default</div>
<div class="t" style="left:67.3px;top:144.0px;font-size:11.5px;letter-spacing:0.076px;">Mobile Clients</div>
<div class="t" style="left:86.0px;top:162.0px;font-size:11.5px;letter-spacing:0.029px;">Hinweise</div>
<div class="t" style="left:86.0px;top:180.0px;font-size:11.5px;letter-spacing:0.107px;">Registrierung</div>
<div class="t" style="left:105.2px;top:198.0px;font-size:11.5px;letter-spacing:-0.039px;">Domänen</div>
<div class="t" style="left:105.2px;top:216.0px;font-size:11.5px;letter-spacing:-0.350px;">Codes</div>
<div class="t" style="left:86.4px;top:234.0px;font-size:11.5px;letter-spacing:-0.295px;">Geräte</div>
<div class="t" style="left:86.4px;top:252.0px;font-size:11.5px;letter-spacing:-0.023px;">Kategorien</div>
<div class="t" style="left:48.3px;top:270.0px;font-size:11.5px;letter-spacing:-0.013px;">Vorlagen</div>
<div class="t" style="left:48.3px;top:288.0px;font-size:11.5px;letter-spacing:-0.086px;">Statische Hinweise</div>
<div class="t" style="left:48.3px;top:306.0px;font-size:11.5px;letter-spacing:0.139px;">Anwendungs Pool</div>
<div class="t" style="left:48.3px;top:324.0px;font-size:11.5px;letter-spacing:-0.026px;">Netzwerk Pool</div>
<div class="t" style="left:48.3px;top:342.0px;font-size:11.5px;letter-spacing:-0.119px;">E-Mail Pool</div>
<div class="t" style="left:48.3px;top:360.0px;font-size:11.5px;letter-spacing:0.226px;">Attribut Pool</div>
<div class="t" style="left:48.3px;top:378.0px;font-size:11.5px;letter-spacing:-0.138px;">Registry Pool</div>
<div class="t" style="left:262.5px;top:102.5px;font-size:18.5px;letter-spacing:0.278px;-webkit-text-stroke:0;color:#111">Hinweise - Alle</div>
<div class="t" style="left:555.3px;top:141.0px;font-size:11.5px;letter-spacing:0.107px;color:#6d6d6d">Filtern</div>
<div class="t" style="left:252.5px;top:170.0px;font-size:11.5px;letter-spacing:0.046px;">Grund</div>
<div class="t" style="left:398.4px;top:170.0px;font-size:11.5px;letter-spacing:-0.054px;">Startzeit</div>
<div class="t" style="left:508.5px;top:170.0px;font-size:11.5px;letter-spacing:-0.180px;">Endzeit</div>
<div class="t" style="left:643.5px;top:170.0px;font-size:11.5px;letter-spacing:-0.075px;">Reichweite</div>
<div class="t" style="left:248.3px;top:193.0px;font-size:11.5px;letter-spacing:-0.125px;">Providerwechsel</div>
<div class="t" style="left:394.3px;top:193.0px;font-size:11.5px;letter-spacing:-0.161px;">Heute 20:30</div>
<div class="t" style="left:504.3px;top:193.0px;font-size:11.5px;letter-spacing:-0.207px;">Heute 22:00</div>
<div class="t" style="left:639.8px;top:193.0px;font-size:11.5px;letter-spacing:-0.144px;">-</div>
<div class="t" style="left:859.4px;top:112.0px;font-size:11.5px;letter-spacing:0.091px;color:#3399ff;-webkit-text-stroke:0">Veröffentlichen...</div>
<div class="t" style="left:859.4px;top:134.0px;font-size:11.5px;letter-spacing:0.100px;color:#3399ff;-webkit-text-stroke:0">Neuen Hinweis hinzufügen...</div>
<div class="t" style="left:859.4px;top:163.0px;font-size:11.5px;letter-spacing:-0.071px;color:#3399ff;-webkit-text-stroke:0">Ausschneiden</div>
<div class="t" style="left:859.4px;top:185.0px;font-size:11.5px;letter-spacing:-0.093px;color:#3399ff;-webkit-text-stroke:0">Kopieren</div>
<div class="t" style="left:859.4px;top:207.0px;font-size:11.5px;letter-spacing:0.099px;color:#484848;-webkit-text-stroke:0.1px currentColor">Einfügen</div>
<div class="t" style="left:859.4px;top:229.0px;font-size:11.5px;letter-spacing:-0.148px;color:#3399ff;-webkit-text-stroke:0">Bearbeiten...</div>
<div class="t" style="left:859.4px;top:251.0px;font-size:11.5px;letter-spacing:-0.103px;color:#3399ff;-webkit-text-stroke:0">Archivieren</div>
<div class="t" style="left:859.4px;top:273.0px;font-size:11.5px;letter-spacing:-0.283px;color:#3399ff;-webkit-text-stroke:0">Löschen</div>
<div class="t" style="left:859.4px;top:295.0px;font-size:11.5px;letter-spacing:-0.052px;color:#3399ff;-webkit-text-stroke:0">Deaktivieren</div>
<div class="t" style="left:859.4px;top:317.0px;font-size:11.5px;letter-spacing:-0.217px;color:#484848;-webkit-text-stroke:0.1px currentColor">Jetzt abschliessen...</div>
<div class="t" style="left:859.4px;top:339.0px;font-size:11.5px;letter-spacing:-0.015px;color:#3399ff;-webkit-text-stroke:0">Reichweite aktualisieren...</div>
<div class="t" style="left:859.4px;top:361.0px;font-size:11.5px;letter-spacing:-0.147px;color:#3399ff;-webkit-text-stroke:0">Termin verschieben...</div>
<div class="t" style="left:859.4px;top:383.0px;font-size:11.5px;letter-spacing:-0.093px;color:#3399ff;-webkit-text-stroke:0">Exportieren...</div>
<div class="t" style="left:859.4px;top:412.0px;font-size:11.5px;letter-spacing:0.023px;color:#3399ff;-webkit-text-stroke:0">Video-Tutorials ansehen...</div>
<div class="t" style="left:857.4px;top:582.8px;font-size:12.2px;letter-spacing:-0.192px;">Die Hinweisgruppe <span style="color:#3399ff;text-decoration:underline;-webkit-text-stroke:0">Default</span> enthält noch</div>
<div class="t" style="left:857.4px;top:597.8px;font-size:12.2px;letter-spacing:-0.135px;">nicht veröffentlichte Änderungen.</div>
<div class="t" style="left:857.4px;top:621.8px;font-size:12.2px;letter-spacing:-0.180px;">Die mobile Hinweisgruppe <span style="color:#3399ff;text-decoration:underline;-webkit-text-stroke:0">Mobile Clients</span></div>
<div class="t" style="left:857.4px;top:637.8px;font-size:12.2px;letter-spacing:-0.088px;">enthält noch nicht veröffentlichte</div>
<div class="t" style="left:857.4px;top:652.8px;font-size:12.2px;letter-spacing:-0.319px;">Änderungen.</div>
<div class="t" style="left:5.5px;top:783.8px;font-size:12px;letter-spacing:0.113px;color:#5a5a5a">C:\IBI-aws\Admin\Data.xml</div>
</body></html>
